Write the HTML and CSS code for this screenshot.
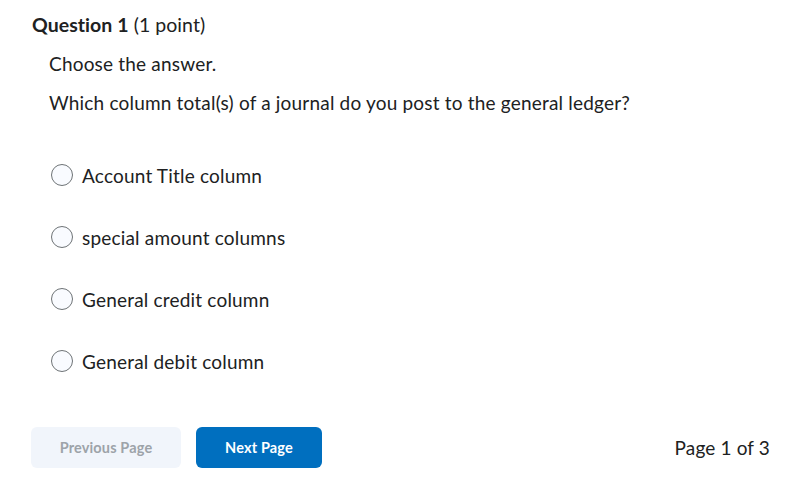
FILE: index.html
```html
<!DOCTYPE html>
<html>
<head>
<meta charset="utf-8">
<link rel="stylesheet" href="styles.css">
</head>
<body>
<div class="page">
  <div class="question">
    <h2 class="q-title"><strong>Question 1</strong> <span class="points">(1 point)</span></h2>
    <div class="q-body">
      <p class="q-text">Choose the answer.</p>
      <p class="q-text">Which column total(s) of a journal do you post to the general ledger?</p>
      <div class="options">
        <label class="option"><span class="radio"></span><span class="opt-label">Account Title column</span></label>
        <label class="option"><span class="radio"></span><span class="opt-label">special amount columns</span></label>
        <label class="option"><span class="radio"></span><span class="opt-label">General credit column</span></label>
        <label class="option"><span class="radio"></span><span class="opt-label">General debit column</span></label>
      </div>
    </div>
  </div>
  <div class="footer">
    <div class="buttons">
      <button class="btn btn-prev">Previous Page</button>
      <button class="btn btn-next">Next Page</button>
    </div>
    <div class="page-count">Page 1 of 3</div>
  </div>
</div>
</body>
</html>
```
FILE: styles.css
```css
html, body {
  margin: 0;
  padding: 0;
  background: #ffffff;
}
body {
  font-family: Lato, "Open Sans", sans-serif;
  color: #202122;
}
.page {
  padding: 12px 17px 0 32px;
}
.q-title {
  margin: 0;
  font-size: 19.5px;
  font-weight: 400;
  line-height: 26px;
  letter-spacing: 0.05px;
}
.q-title strong {
  font-weight: 700;
}
.q-body {
  padding-left: 17px;
  padding-top: 12px;
}
.q-text {
  margin: 0 0 12px 0;
  font-size: 19px;
  line-height: 27px;
  letter-spacing: 0.19px;
}
.options {
  display: flex;
  flex-direction: column;
  gap: 36px;
  margin-top: 46px;
}
.option {
  display: flex;
  align-items: center;
  height: 26px;
  gap: 9px;
  font-size: 19px;
  letter-spacing: 0.19px;
  margin-left: 2px;
}
.radio {
  width: 20px;
  height: 20px;
  border: 1px solid #6e7376;
  border-radius: 50%;
  background: #f9fbff;
  flex: none;
}
.footer {
  display: flex;
  justify-content: space-between;
  align-items: center;
  margin-top: 53px;
  margin-left: -1px;
}
.buttons {
  display: flex;
  gap: 15px;
}
.btn {
  font-family: Lato, sans-serif;
  font-weight: 700;
  font-size: 14.5px;
  letter-spacing: 0.15px;
  height: 41px;
  border: none;
  border-radius: 6px;
  padding: 0;
}
.btn-prev {
  background: #f1f5fb;
  color: #9da3a9;
  width: 150px;
}
.btn-next {
  background: #006fbf;
  color: #ffffff;
  width: 126px;
}
.page-count {
  font-size: 19px;
  letter-spacing: 0.15px;
}
```
